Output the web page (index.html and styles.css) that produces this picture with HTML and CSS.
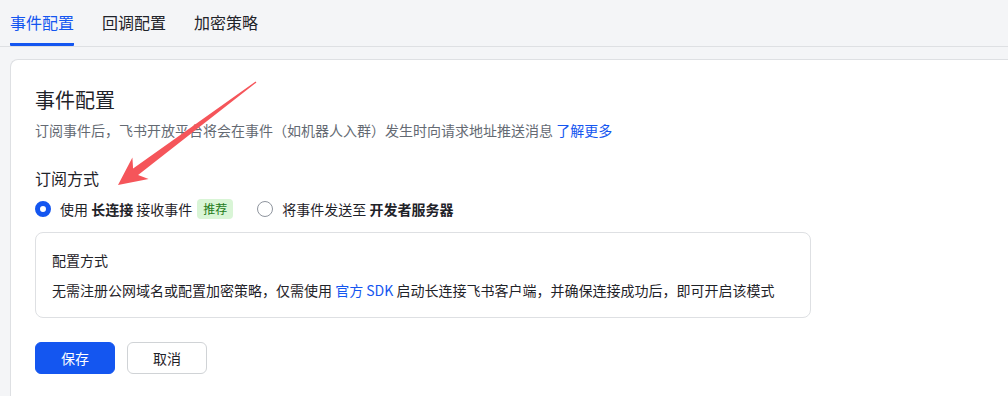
FILE: index.html
```html
<!DOCTYPE html>
<html lang="zh-CN">
<head>
    <meta charset="UTF-8">
    <title>事件配置</title>
    <link rel="stylesheet" href="styles.css">
</head>
<body>
    <div class="tabs">
        <div class="tab active">事件配置</div>
        <div class="tab">回调配置</div>
        <div class="tab">加密策略</div>
    </div>

    <div class="card">
        <h2 class="title">事件配置</h2>
        <p class="desc">订阅事件后，飞书开放平台将会在事件（如机器人入群）发生时向请求地址推送消息 <a class="link">了解更多</a></p>

        <h3 class="subtitle">订阅方式</h3>
        <div class="radios">
            <label class="radio">
                <span class="dot checked"></span>
                <span>使用 <b>长连接</b> 接收事件</span>
                <span class="tag">推荐</span>
            </label>
            <label class="radio">
                <span class="dot"></span>
                <span>将事件发送至 <b>开发者服务器</b></span>
            </label>
        </div>

        <div class="info">
            <div>配置方式</div>
            <div>无需注册公网域名或配置加密策略，仅需使用 <a class="link">官方 SDK</a> 启动长连接飞书客户端，并确保连接成功后，即可开启该模式</div>
        </div>

        <div class="actions">
            <button class="btn primary">保存</button>
            <button class="btn">取消</button>
        </div>
    </div>

    <!-- annotation arrow -->
    <svg class="arrow" width="1008" height="396" viewBox="0 0 1008 396">
        <polygon fill="#f5555a" points="256.4,82.5 138.1,175.1 148.6,179 118,185 132.4,157.6 133.1,168.5 255.6,81.5"/>
    </svg>
</body>
</html>
```

FILE: styles.css
```css
body {
    font-family: "Noto Sans CJK SC", "Noto Sans", sans-serif;
    background-color: #f4f5f7;
    color: #1f2329;
    margin: 0;
    overflow: hidden;
}

.tabs {
    display: flex;
    gap: 28px;
    padding-left: 10px;
    height: 46px;
    border-bottom: 1px solid #dee0e3;
}

.tab {
    font-size: 16px;
    line-height: 44px;
    height: 46px;
    box-sizing: border-box;
    border-bottom: 3px solid transparent;
    margin-bottom: -1px;
}

.tab.active {
    color: #1456f0;
    border-bottom-color: #1456f0;
    border-radius: 0 0 1px 1px;
}

.card {
    margin: 12px 0 0 10px;
    background: white;
    border: 1px solid #dee0e3;
    border-right: none;
    border-radius: 8px 0 0 0;
    padding: 26px 24px 40px;
}

.title {
    font-size: 20px;
    line-height: 28px;
    font-weight: normal;
    margin: 0;
}

.desc {
    font-size: 14px;
    line-height: 22px;
    color: #646a73;
    margin: 5px 0 0;
}

.link {
    color: #1456f0;
}

.subtitle {
    font-size: 16px;
    line-height: 24px;
    font-weight: normal;
    margin: 25px 0 0;
}

.radios {
    display: flex;
    gap: 24px;
    margin-top: 8px;
    font-size: 14px;
    line-height: 22px;
}

.radio {
    display: flex;
    align-items: center;
    gap: 9px;
}

.radio b {
    font-weight: 600;
}

.dot {
    width: 16px;
    height: 16px;
    box-sizing: border-box;
    border: 1px solid #8f959e;
    border-radius: 50%;
    background: white;
}

.dot.checked {
    border: 5px solid #1456f0;
}

.tag {
    font-size: 12px;
    line-height: 20px;
    padding: 0 6px;
    border-radius: 4px;
    background: #d9f5d6;
    color: #237b19;
    margin-left: -4px;
}

.info {
    width: 776px;
    box-sizing: border-box;
    margin-top: 12px;
    border: 1px solid #dee0e3;
    border-radius: 8px;
    padding: 16px;
    font-size: 14px;
    line-height: 22px;
    display: flex;
    flex-direction: column;
    gap: 8px;
}

.actions {
    display: flex;
    gap: 12px;
    margin-top: 24px;
}

.btn {
    width: 80px;
    height: 32px;
    border: 1px solid #d0d3d6;
    border-radius: 6px;
    background: white;
    color: #1f2329;
    font-family: inherit;
    font-size: 14px;
}

.btn.primary {
    background: #1456f0;
    border-color: #1456f0;
    color: white;
}

.arrow {
    position: absolute;
    left: 0;
    top: 0;
    pointer-events: none;
}
```
